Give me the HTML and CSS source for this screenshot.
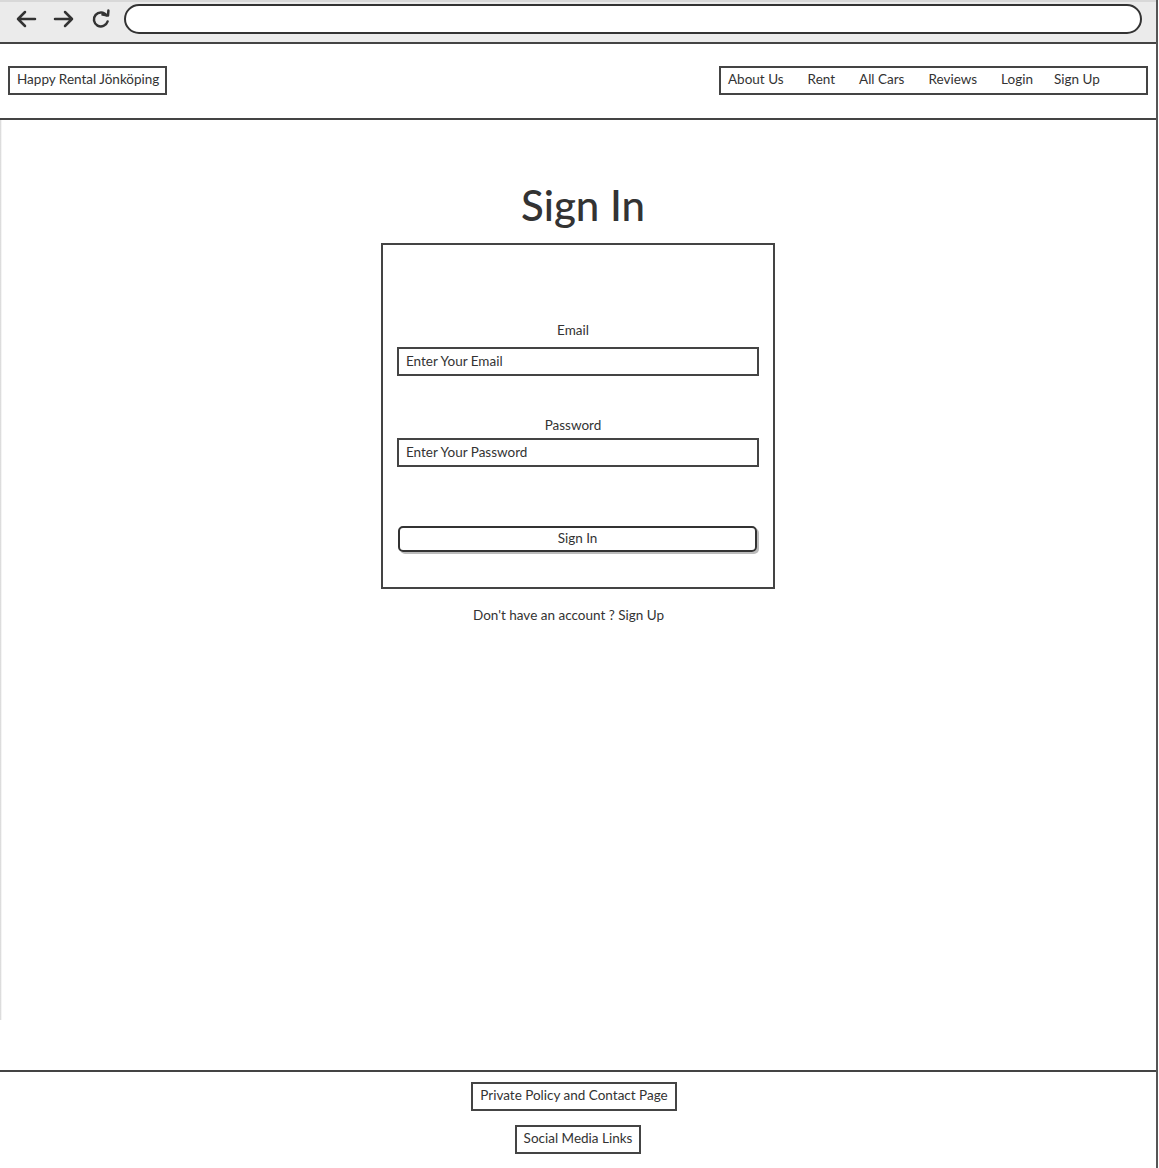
FILE: index.html
```html
<!DOCTYPE html>
<html lang="en">
<head>
<meta charset="utf-8">
<title>Sign In - Happy Rental Jönköping</title>
<link rel="stylesheet" href="styles.css">
</head>
<body>
<div class="window">
  <div class="chrome">
    <div class="nav-icons">
      <svg class="icon" width="22" height="20" viewBox="0 0 22 20"><path d="M20 10 H3 M10 3 L3 10 L10 17" fill="none" stroke="#333" stroke-width="2.5" stroke-linecap="round" stroke-linejoin="round"/></svg>
      <svg class="icon" width="22" height="20" viewBox="0 0 22 20"><path d="M2 10 H19 M12 3 L19 10 L12 17" fill="none" stroke="#333" stroke-width="2.5" stroke-linecap="round" stroke-linejoin="round"/></svg>
      <svg class="icon" width="20" height="20" viewBox="0 0 20 20"><path d="M15.5 6.2 A7 7 0 1 0 16.6 12.5" fill="none" stroke="#333" stroke-width="2.5" stroke-linecap="round"/><path d="M11.5 5.6 L17 6.6 L17.4 1.6" fill="none" stroke="#333" stroke-width="2.5" stroke-linecap="round" stroke-linejoin="round"/></svg>
    </div>
    <div class="address"></div>
  </div>
  <header class="header">
    <div class="sketch-box logo">Happy Rental Jönköping</div>
    <nav class="sketch-box menu">
      <a class="menu-item">About Us</a>
      <a class="menu-item">Rent</a>
      <a class="menu-item">All Cars</a>
      <a class="menu-item">Reviews</a>
      <a class="menu-item">Login</a>
      <a class="menu-item last">Sign Up</a>
    </nav>
  </header>
  <main class="main">
    <h1 class="title">Sign In</h1>
    <form class="form-box">
      <label class="field-label">Email</label>
      <div class="input">Enter Your Email</div>
      <label class="field-label second">Password</label>
      <div class="input pw">Enter Your Password</div>
      <div class="button">Sign In</div>
    </form>
    <p class="signup">Don't have an account ? Sign Up</p>
  </main>
  <footer class="footer">
    <div class="sketch-box foot-link">Private Policy and Contact Page</div>
    <div class="sketch-box foot-link">Social Media Links</div>
  </footer>
</div>
</body>
</html>
```
FILE: styles.css
```css
* { box-sizing: border-box; }
html, body { margin: 0; padding: 0; background: #fff; }
body {
  font-family: Lato, "Open Sans", "Liberation Sans", sans-serif;
  color: #333;
  font-size: 13.5px;
}
.window {
  width: 1158px;
  height: 1168px;
  display: flex;
  flex-direction: column;
  border-right: 2px solid #555;
  background: linear-gradient(to right, rgba(0,0,0,0.18) 0, rgba(0,0,0,0) 2px) no-repeat 0 120px / 2px 900px, #fff;
}
.chrome {
  height: 44px;
  background: #ebebeb;
  border-top: 2px solid #d8d8d8;
  border-bottom: 2px solid #444;
  display: flex;
  align-items: center;
  padding: 0 14px 0 15px;
  gap: 14px;
}
.nav-icons {
  display: flex;
  align-items: center;
  gap: 16px;
  margin-top: -6px;
}
.icon { display: block; }
.address {
  flex: 1;
  height: 30px;
  margin-top: -7px;
  background: #fff;
  border: 2px solid #333;
  border-radius: 15px;
  margin-left: -1px;
}
.header {
  height: 76px;
  border-bottom: 2px solid #444;
  display: flex;
  justify-content: space-between;
  align-items: flex-start;
  padding: 22px 8px 0 8px;
}
.sketch-box {
  border: 2px solid #444;
  background: #fff;
  height: 29px;
  display: flex;
  align-items: center;
  white-space: nowrap;
  padding-bottom: 3px;
}
.logo { padding: 0 6px 3px 7px; }
.menu {
  width: 429px;
  padding: 0 7px 3px;
}
.menu-item { color: #333; }
.menu-item + .menu-item { margin-left: 24px; }
.menu-item.last { margin-left: 21px; }
.main {
  flex: 1;
  display: flex;
  flex-direction: column;
  align-items: center;
}
.title {
  margin: 61px 0 0 10px;
  font-size: 42px;
  font-weight: 500;
  line-height: 49px;
  color: #333;
}
.form-box {
  margin: 13px 0 0 0;
  width: 394px;
  height: 346px;
  border: 2px solid #444;
  padding: 77px 14px 0 14px;
  display: flex;
  flex-direction: column;
}
.field-label {
  text-align: center;
  line-height: 16px;
  margin-left: -10px;
}
.field-label.second { margin-top: 41px; }
.input {
  margin-top: 9px;
  height: 29px;
  border: 2px solid #444;
  display: flex;
  align-items: center;
  padding: 0 0 2px 7px;
}
.input.pw { margin-top: 5px; }
.button {
  margin: 59px 2px 0 1px;
  height: 26px;
  border: 2px solid #333;
  border-radius: 5px;
  box-shadow: 2px 2px 0 #bbb;
  display: flex;
  align-items: center;
  justify-content: center;
  padding-bottom: 2px;
}
.signup {
  margin: 18px 0 0 -19px;
  line-height: 17px;
}
.footer {
  height: 98px;
  border-top: 2px solid #444;
  display: flex;
  flex-direction: column;
  align-items: center;
  padding-top: 10px;
  gap: 14px;
}
.foot-link { padding: 0 7px 3px 7px; }
.foot-link:first-child { margin-left: -8px; }
```
